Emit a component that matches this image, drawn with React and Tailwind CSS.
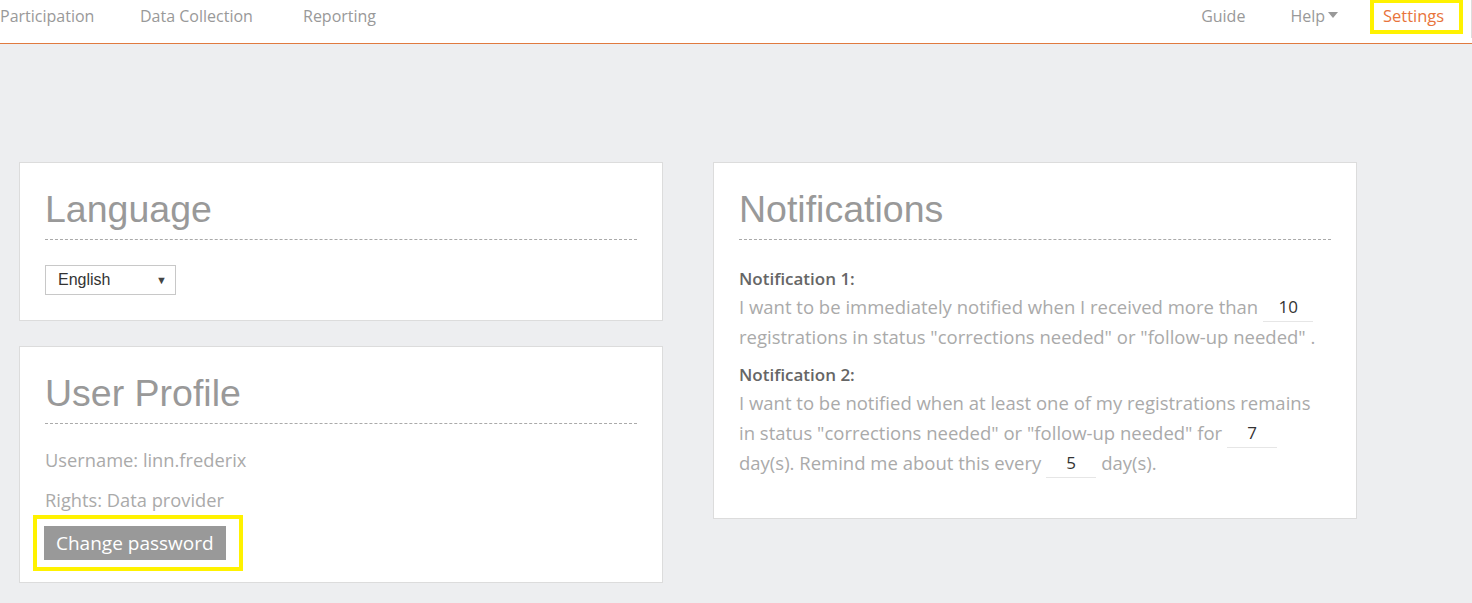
import { useState } from "react";

const body = "font-['Open_Sans','Liberation_Sans',sans-serif]";
const head = "font-['Liberation_Sans',Arial,sans-serif]";

function NumInput({ value }) {
  return (
    <span className="inline-block w-[50px] border-b border-[#e6e6e6] text-center text-[17px] text-[#333] mx-[5px] leading-[29px] align-top">
      {value}
    </span>
  );
}

function Card({ title, children, className = "" }) {
  return (
    <div className={`bg-white border border-[#dcdcdc] px-[25px] pt-[22px] ${className}`}>
      <h2 className={`${head} text-[37.5px] leading-[48px] text-[#999] pb-[6px] border-b border-dashed border-[#aaa]`}>{title}</h2>
      {children}
    </div>
  );
}

export default function App() {
  const [lang, setLang] = useState("English");

  return (
    <div className={`min-h-[603px] bg-[#edeef0] ${body}`}>
      {/* top nav */}
      <div className="h-[44px] bg-white border-b border-[#e07a3f] flex items-start text-[16px] text-[#999]">
        <div className="flex">
          <span className="pt-[4px] w-[140px]">Participation</span>
          <span className="pt-[4px] w-[163px]">Data Collection</span>
          <span className="pt-[4px]">Reporting</span>
        </div>
        <div className="ml-auto flex items-start">
          <span className="pt-[4px] mr-[45px]">Guide</span>
          <span className="pt-[4px] mr-[32px] flex items-center gap-[3px]">
            Help
            <svg width="10" height="6" viewBox="0 0 10 6" className="mt-[-3px]"><path d="M0 0h10L5 6z" fill="#999" /></svg>
          </span>
          <span className="border-[4px] border-[#fff200] h-[35px] w-[93px] mt-[-1px] pl-[9px] pt-[1px] text-[16.5px] text-[#e8743b]">Settings</span>
          <span className="w-[9px] h-[38px] border-r border-[#ddd]" />
        </div>
      </div>

      <div className="flex gap-[50px] pl-[19px] pt-[118px]">
        {/* left column */}
        <div className="w-[644px] flex flex-col gap-[25px]">
          <Card title="Language" className="pb-[25px]">
            <div className="pt-[25px]">
              <div className="relative w-[131px] h-[30px] border border-[#c8c8c8]">
                <select
                  value={lang}
                  onChange={(e) => setLang(e.target.value)}
                  className={`${head} appearance-none w-full h-full bg-transparent pl-[12px] text-[16px] text-[#333] outline-none`}
                >
                  <option>English</option>
                  <option>Nederlands</option>
                  <option>Français</option>
                </select>
                <span className="absolute right-[8px] top-[6px] text-[11px] text-[#444] pointer-events-none">▼</span>
              </div>
            </div>
          </Card>

          <Card title="User Profile" className="pb-[11px]">
            <div className="text-[18.3px] text-[#aaa] pt-[22px]">
              <p className="leading-[28px]">Username: linn.frederix</p>
              <p className="leading-[28px] mt-[12px]">Rights: Data provider</p>
            </div>
            <div className="ml-[-12px] mt-[1px] w-[210px] border-[4px] border-[#fff200] px-[7px] py-[7px]">
              <button className="bg-[#999] text-white text-[19px] h-[34px] px-[12px] leading-[34px]">Change password</button>
            </div>
          </Card>
        </div>

        {/* right column */}
        <div className="w-[644px]">
          <Card title="Notifications" className="pb-[40px]">
            <div className="text-[18.5px] text-[#aaa] pt-[26px]">
              <p className="text-[17px] text-[#666] font-semibold leading-[26px]">Notification 1:</p>
              <p className="leading-[30px]">
                I want to be immediately notified when I received more than<NumInput value="10" />
                registrations in status "corrections needed" or "follow-up needed" .
              </p>
              <p className="text-[17px] text-[#666] font-semibold leading-[26px] mt-[10px]">Notification 2:</p>
              <p className="leading-[29.5px]">
                I want to be notified when at least one of my registrations remains in status "corrections needed" or "follow-up needed" for
                <NumInput value="7" />day(s). Remind me about this every<NumInput value="5" />day(s).
              </p>
            </div>
          </Card>
        </div>
      </div>
    </div>
  );
}
